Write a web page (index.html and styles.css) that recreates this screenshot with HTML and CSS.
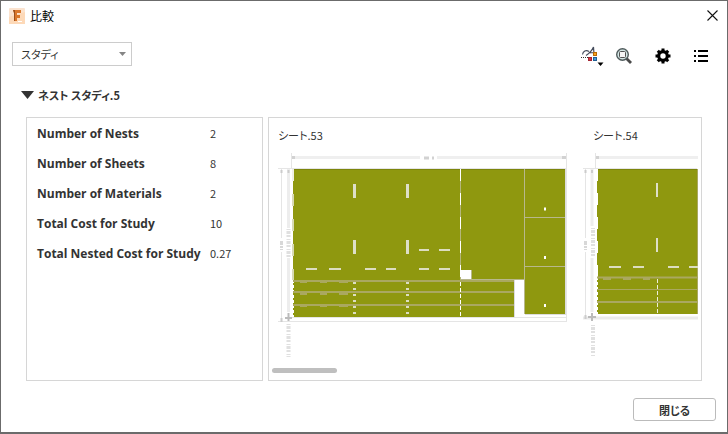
FILE: index.html
```
<!DOCTYPE html>
<html lang="ja">
<head>
    <meta charset="UTF-8">
    <meta name="viewport" content="width=device-width, initial-scale=1.0">
    <title>比較</title>
    <link rel="stylesheet" href="styles.css">
</head>
<body>
    <div class="dialog">
        <header class="titlebar">
            <svg class="logo" width="16" height="16" viewBox="0 0 16 16" aria-hidden="true">
                <rect width="16" height="16" rx="1" fill="#fbe3cf"/>
                <path d="M0 9L16 4V16H0z" fill="#fdd9b8"/>
                <path d="M4 2h8v3H8v2h3v3H8v3H5V5z" fill="#d9772b"/>
                <path d="M4 2h2v11H5V5z" fill="#9c501c"/>
                <path d="M9 13h4v1H9z" fill="#fff"/>
            </svg>
            <h1>比較</h1>
            <button class="close" type="button" aria-label="閉じる">
                <svg width="11" height="11" viewBox="0 0 11 11"><path d="M.5.5l10 10M10.5.5l-10 10" stroke="#111" stroke-width="1.1"/></svg>
            </button>
        </header>

        <div class="toolbar">
            <div class="picker">
                <select aria-label="比較対象">
                    <option>スタディ</option>
                </select>
                <svg class="arrow" width="7" height="4" viewBox="0 0 7 4"><path d="M0 0h7L3.5 4z" fill="#858585"/></svg>
            </div>
            <div class="tools">
                <button type="button" aria-label="ネスト">
                    <svg width="24" height="22" viewBox="0 0 24 22">
                        <path d="M1.500 9.500C2 6 5 4.500 8 6.500M5 10.500C8 8.500 11 5.500 12.500 2L13 9M7.500 8L13 7.500" fill="none" stroke="#454c5c" stroke-width="1.200"/>
                        <path d="M0 12.500h7" stroke="#333" stroke-dasharray="1 1"/>
                        <rect x="12.500" y="7.500" width="3" height="3" fill="#f9a51a" stroke="#b86a08"/>
                        <rect x="7.500" y="12.500" width="3" height="3" fill="#d8353e" stroke="#a32632"/>
                        <rect x="12.500" y="12.500" width="3" height="3" fill="#3c9bdc" stroke="#205f94"/>
                        <path d="M16.500 17.500h6l-3 3.500z" fill="#000"/>
                    </svg>
                </button>
                <button type="button" aria-label="ズーム">
                    <svg width="16" height="16" viewBox="0 0 16 16">
                        <path d="M10.500 10.500L15 15" stroke="#4a4a4a" stroke-width="2.800"/>
                        <circle cx="6.500" cy="6.500" r="5.800" fill="#d3e6e5" stroke="#505b5c" stroke-width="1.400"/>
                        <rect x="3.500" y="3.500" width="6" height="6" rx="1" fill="#f6f6f6" stroke="#525252"/>
                    </svg>
                </button>
                <button type="button" aria-label="設定">
                    <svg width="16" height="16" viewBox="-8 -8 16 16">
                        <circle r="4.300" fill="none" stroke="#000" stroke-width="3.200"/>
                        <path d="M0-7.500V-5M0 5V7.500M-7.500 0H-5M5 0H7.500M-5.200-5.200L-3.600-3.600M3.600 3.600L5.200 5.200M-5.200 5.200L-3.600 3.600M3.600-3.600L5.200-5.200" stroke="#000" stroke-width="3"/>
                    </svg>
                </button>
                <button type="button" aria-label="リスト">
                    <svg width="14" height="12" viewBox="0 0 14 12"><path d="M0 1h2M4 1h10M0 6h2M4 6h10M0 11h2M4 11h10" stroke="#000" stroke-width="2"/></svg>
                </button>
            </div>
        </div>

        <details class="study" open>
            <summary>
                <svg width="13" height="8" viewBox="0 0 13 8"><path d="M0 0h13L6.500 8z" fill="#333"/></svg>
                ネスト スタディ.5
            </summary>
        </details>

        <main class="panels">
            <section class="panel stats">
                <table>
                    <tr><th scope="row">Number of Nests</th><td>2</td></tr>
                    <tr><th scope="row">Number of Sheets</th><td>8</td></tr>
                    <tr><th scope="row">Number of Materials</th><td>2</td></tr>
                    <tr><th scope="row">Total Cost for Study</th><td>10</td></tr>
                    <tr><th scope="row">Total Nested Cost for Study</th><td>0.27</td></tr>
                </table>
            </section>

            <section class="panel sheets">
                <div class="strip">
                    <figure>
                        <figcaption>シート.53</figcaption>
                        <svg width="290" height="208" viewBox="278 152 290 208" role="img" aria-label="シート.53">
                            <!-- dimension lines -->
                            <path d="M292 157.500H420M437 157.500H566" stroke="#efefef" stroke-width="3"/>
                            <path d="M424 158h5M432 158h2M292 157.500h3M562 157.500h4" stroke="#d2d2d2" stroke-width="3"/>
                            <path d="M291.500 153V169M566.500 153V322M278 168.500H566M281.500 169V238M281.500 252V322M278 321.500H567M292 317.500H566" stroke="#e5e5e5"/>
                            <path d="M288.500 169V228M288.500 258V312" stroke="#ededed" stroke-width="3"/>
                            <path d="M281.500 170v3M288.500 170v3M281.500 318v4" stroke="#ccc" stroke-width="2"/>
                            <path d="M281.500 241v9" stroke="#d8d8d8" stroke-width="3" stroke-dasharray="4 1 2 1"/>
                            <path d="M288.500 229v29M288.500 324v33" stroke="#e0e0e0" stroke-width="4" stroke-dasharray="1 1 3 1 2 2"/>
                            <path d="M288.500 313v8M285 318h7" stroke="#bbb" stroke-width="2"/>
                            <!-- parts -->
                            <path d="M293 169H565V314H525V280H514V317H293z" fill="#8f980f"/>
                            <path d="M514 280h10v37h-10zM461 270h10v10h-10z" fill="#fff"/>
                            <path d="M293 169.500H565" stroke="#7c850c"/>
                            <path d="M293 181V280" stroke="#d8dab5" stroke-width="2" stroke-dasharray="0 13 12 0"/>
                            <path d="M293 169V181" stroke="#f0f0e4" stroke-width="2"/>
                            <path d="M293 280V317" stroke="#fff" stroke-width="2" stroke-dasharray="3 2"/>
                            <path d="M460.500 169V280" stroke="#b5b67c"/>
                            <path d="M460.500 169V280" stroke="#fff" stroke-dasharray="12 12"/>
                            <path d="M524.500 169V314M525 217.500H565M525 266.500H565M461 279.500H524M471.500 270V280" stroke="#b8b88c"/>
                            <path d="M293 281H514M293 292H514M293 305H514" stroke="#aaa860" stroke-width="2"/>
                            <path d="M514.500 280V317M525 314.500H565M565.500 169V315" stroke="#ddd"/>
                            <path d="M354.500 184v14M407.500 184v14M354.500 240v14M407.500 240v14" stroke="#dedfc8" stroke-width="3"/>
                            <path d="M306 269h11M329 269h12M365 269h11M386 269h10M419 269h10M439 269h11M419 250h10M439 250h11" stroke="#dcddc0" stroke-width="2"/>
                            <path d="M300 282h7M320 282h7M339 282h9M300 294h7M320 294h7M339 294h9M300 306h7M320 306h7M339 306h9" stroke="#aaa860" stroke-width="2"/>
                            <path d="M354.500 282V317M407.500 282V317" stroke="#dddec2" stroke-width="3" stroke-dasharray="2 4"/>
                            <path d="M460.500 282V317" stroke="#fff" stroke-dasharray="4 2"/>
                            <path d="M544 209h2M544 257.500h2M544 305.500h2" stroke="#fff" stroke-width="3"/>
                        </svg>
                    </figure>
                    <figure class="next">
                        <figcaption>シート.54</figcaption>
                        <svg width="115" height="208" viewBox="583 152 115 208" role="img" aria-label="シート.54">
                            <path d="M596 157.500H698" stroke="#efefef" stroke-width="3"/>
                            <path d="M596 157.500h3" stroke="#d2d2d2" stroke-width="3"/>
                            <path d="M595.500 153V169M583 168.500H697M585.500 169V238M585.500 252V318" stroke="#e5e5e5"/>
                            <path d="M583 318H698" stroke="#ebebeb" stroke-width="3"/>
                            <path d="M592 169V226M592 258V312" stroke="#ededed" stroke-width="3"/>
                            <path d="M585.500 170v3M592 170v3M585.500 315v4" stroke="#ccc" stroke-width="2"/>
                            <path d="M585.500 241v9" stroke="#d8d8d8" stroke-width="3" stroke-dasharray="4 1 2 1"/>
                            <path d="M593 228v30M593 325v32" stroke="#e0e0e0" stroke-width="4" stroke-dasharray="1 1 3 1 2 2"/>
                            <path d="M592 313v8M588 317h8" stroke="#bbb" stroke-width="2"/>
                            <path d="M597 169H698V314H597z" fill="#8f980f"/>
                            <path d="M597 169.500H698" stroke="#7c850c"/>
                            <path d="M597 169V277" stroke="#fff" stroke-width="2" stroke-dasharray="12 12"/>
                            <path d="M597 277V314" stroke="#fff" stroke-width="2" stroke-dasharray="3 2"/>
                            <path d="M597 277.500H698M597 302H698" stroke="#aaa860" stroke-width="2"/>
                            <path d="M597 289.500H698M697.500 169V314" stroke="#aaa860"/>
                            <path d="M657 183v14M657 238v14" stroke="#dedfc8" stroke-width="2"/>
                            <path d="M609 267h12M633 267h11M668 267h11M689 267h9" stroke="#dcddc0" stroke-width="2"/>
                            <path d="M603 279h8M623 279h8M643 279h7" stroke="#aaa860" stroke-width="2"/>
                            <path d="M657.500 279V314" stroke="#eeefdc" stroke-dasharray="4 2"/>
                        </svg>
                    </figure>
                </div>
                <div class="scrollbar"></div>
            </section>
        </main>

        <footer>
            <button class="done" type="button">閉じる</button>
        </footer>
    </div>
</body>
</html>
```
FILE: styles.css
```
* {
    box-sizing: border-box;
}

body {
    margin: 0;
    font-family: "Noto Sans CJK JP", sans-serif;
    font-size: 11px;
    font-feature-settings: "palt";
    color: #333;
}

button, select {
    font: inherit;
    font-feature-settings: inherit;
    color: inherit;
}

svg {
    display: block;
}

.dialog {
    display: flex;
    flex-direction: column;
    min-height: 100vh;
    background-color: #fff;
    border: 1px solid #6b6b6b;
    border-bottom-width: 2px;
}

.titlebar {
    display: flex;
    align-items: center;
    gap: 5px;
    height: 29px;
    padding: 0 9px 0 8px;
}

.titlebar h1 {
    flex: 1;
    margin: 0;
    font-size: 12px;
    font-weight: normal;
    color: #000;
}

.close {
    padding: 0;
    border: none;
    background: none;
}

.toolbar {
    display: flex;
    justify-content: space-between;
    align-items: center;
    height: 50px;
    padding: 0 19px 2px 11px;
}

.picker {
    display: grid;
    align-items: center;
    width: 120px;
}

.picker select, .arrow {
    grid-area: 1 / 1;
}

.picker select {
    height: 24px;
    padding: 0 8px;
    appearance: none;
    background-color: #fff;
    border: 1px solid #ccc;
    border-radius: 0;
}

.arrow {
    justify-self: end;
    margin-right: 6px;
    pointer-events: none;
}

.tools {
    display: flex;
    align-items: center;
    gap: 23px;
    padding-top: 4px;
}

.tools button {
    padding: 0;
    border: none;
    background: none;
}

.tools button:first-child {
    margin-right: -12px;
}

.study summary {
    display: flex;
    align-items: center;
    gap: 4px;
    height: 37px;
    padding: 0 20px 8px;
    list-style: none;
    font-weight: bold;
}

.panels {
    flex: 1;
    display: flex;
    gap: 5px;
    padding: 0 25px;
}

.panel {
    border: 1px solid #d6d6d6;
}

.stats {
    flex: 0 0 237px;
    padding-left: 10px;
}

.stats table {
    border-collapse: collapse;
}

.stats th, .stats td {
    height: 30px;
    padding: 0;
    white-space: nowrap;
    text-align: left;
}

.stats th {
    width: 173px;
    font-family: "Open Sans", sans-serif;
    font-size: 12px;
}

.sheets {
    flex: 1;
    display: flex;
    flex-direction: column;
    justify-content: space-between;
    min-width: 0;
    padding: 7px 3px;
}

.strip {
    display: flex;
    gap: 15px;
    padding-left: 6px;
    overflow: hidden;
}

.strip figure {
    flex: none;
    margin: 0;
}

.strip figcaption {
    height: 27px;
    line-height: 20px;
}

.next figcaption {
    padding-left: 10px;
}

.scrollbar {
    width: 65px;
    height: 5px;
    border-radius: 3px;
    background-color: #bfbfbf;
}

footer {
    display: flex;
    justify-content: flex-end;
    padding: 17px 11px 11px;
}

.done {
    width: 83px;
    height: 23px;
    padding: 0;
    background-color: #fff;
    border: 1px solid #bbb;
    border-radius: 3px;
    font-weight: bold;
}
```
